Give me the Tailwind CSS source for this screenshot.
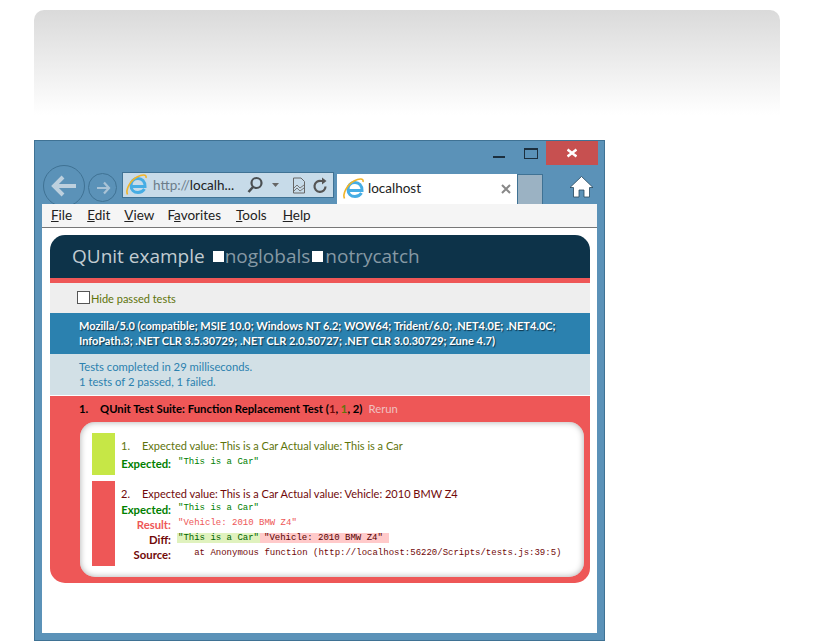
<!DOCTYPE html>
<html>
<head>
<meta charset="utf-8">
<script src="https://cdn.jsdelivr.net/npm/@tailwindcss/browser@4"></script>
</head>
<body class="bg-white overflow-hidden">
<div class="w-[815px] h-[641px] overflow-hidden font-['Lato','Open_Sans',sans-serif]">
  <div class="ml-[34px] mt-[10px] w-[746px] h-[105px] rounded-t-[10px] bg-gradient-to-b from-[#dadada] to-white"></div>

  <div class="ml-[34px] mt-[25px] w-[571px] h-[501px] bg-[#5b92b8] border border-[#3f7294] flex flex-col">
    <!-- title bar -->
    <div class="h-[24px] flex justify-end items-start shrink-0">
      <div class="w-[26px] h-[24px] flex justify-center"><div class="mt-[15px] w-[12px] h-[2px] bg-[#1c2f3e]"></div></div>
      <div class="w-[26px] h-[24px] flex justify-center ml-[6px]"><div class="mt-[7px] w-[14px] h-[11px] border border-[#1c2f3e] border-t-[2px]"></div></div>
      <div class="w-[52px] h-[24px] ml-[2px] mr-[6px] bg-[#c75050] flex items-center justify-center">
        <svg width="10" height="10" viewBox="0 0 10 10"><path d="M0.5 1.5 L9.5 8.5 M9.5 1.5 L0.5 8.5" stroke="#fff" stroke-width="2.4"/></svg>
      </div>
    </div>
    <!-- toolbar -->
    <div class="h-[39px] flex items-start shrink-0 relative">
      <div class="ml-[8px] mt-[0px] w-[42px] h-[42px] rounded-full border border-[#3f7294] flex items-center justify-center">
        <svg width="26" height="22" viewBox="0 0 26 22"><path d="M12 2 L3 11 L12 20 M3 11 H25" fill="none" stroke="#bdd0de" stroke-width="4"/></svg>
      </div>
      <div class="ml-[3px] mt-[8px] w-[29px] h-[29px] rounded-full border border-[#3f7294] flex items-center justify-center">
        <svg width="16" height="14" viewBox="0 0 16 14"><path d="M9 1.5 L14 7 L9 12.5 M14 7 H2" fill="none" stroke="#a9c3d6" stroke-width="2.2"/></svg>
      </div>
      <div class="ml-[5px] mt-[7px] w-[212px] h-[26px] bg-[#c7dbe9] border border-[#3f7294] flex items-center text-[13.5px] relative">
        <svg class="ml-[2px] shrink-0" width="23" height="22" viewBox="0 0 23 22"><path d="M6 11.5 C6 7 9 4.5 13 4.5 C17 4.5 20 7.5 20 12.5 H7 M6 11.5 C6 16 9 18.5 13 18.5 C16 18.5 18 17.3 19.5 15" fill="none" stroke="#46ade4" stroke-width="3"/><path d="M2.5 20.5 C0.5 16 4.5 7 12 3 C17 0.3 22 0 21 4" fill="none" stroke="#f0b429" stroke-width="1.6"/></svg>
        <span class="ml-[5px] text-[#6c7d89]">http://<span class="text-[#222]">localh...</span></span>
        <svg class="ml-[12px] shrink-0" width="18" height="18" viewBox="0 0 18 18"><circle cx="10.5" cy="7" r="5" fill="none" stroke="#4a4f52" stroke-width="2.2"/><path d="M7 11 L2.5 16" stroke="#4a4f52" stroke-width="2.6"/></svg>
        <svg class="ml-[8px] shrink-0" width="8" height="4" viewBox="0 0 8 4"><path d="M0 0 H7 L3.5 4 Z" fill="#666"/></svg>
        <svg class="ml-[12px] shrink-0" width="14" height="17" viewBox="0 0 14 17"><path d="M1.5 1 H9 L12.5 4.5 V16 H1.5 Z" fill="none" stroke="#666"/><path d="M2 11 L5 8 L8 11 L12 8 M2 14 L5 11 L8 14 L12 11" fill="none" stroke="#777"/></svg>
        <svg class="ml-[7px] shrink-0" width="15" height="17" viewBox="0 0 15 17"><path d="M12.5 9.5 A5.5 5.5 0 1 1 8 4 H11" fill="none" stroke="#555" stroke-width="2.2"/><path d="M9 0.5 L13.5 4 L9 7.5 Z" fill="#555"/></svg>
      </div>
      <div class="ml-[3px] mt-[9px] w-[180px] h-[30px] bg-white flex items-center relative">
        <svg class="ml-[5px] shrink-0" width="23" height="22" viewBox="0 0 23 22"><path d="M6 11.5 C6 7 9 4.5 13 4.5 C17 4.5 20 7.5 20 12.5 H7 M6 11.5 C6 16 9 18.5 13 18.5 C16 18.5 18 17.3 19.5 15" fill="none" stroke="#46ade4" stroke-width="3"/><path d="M2.5 20.5 C0.5 16 4.5 7 12 3 C17 0.3 22 0 21 4" fill="none" stroke="#f0b429" stroke-width="1.6"/></svg>
        <span class="ml-[3px] text-[13.5px] text-[#222] leading-none">localhost</span>
        <svg class="ml-auto mr-[6px] shrink-0" width="10" height="10" viewBox="0 0 10 10"><path d="M1 1 L9 9 M9 1 L1 9" stroke="#888" stroke-width="2"/></svg>
      </div>
      <div class="mt-[9px] w-[26px] h-[30px] bg-[#9bb2c3] border border-[#3f7294] border-b-0"></div>
      <div class="ml-[26px] mt-[10px]">
        <svg width="25" height="23" viewBox="0 0 25 23"><path d="M12.5 1.5 L24 12.5 H20.5 V22 H15 V15 H10 V22 H4.5 V12.5 H1 Z" fill="#fff" stroke="#26465c" stroke-width="0.8"/></svg>
      </div>
    </div>
    <!-- content frame -->
    <div class="mx-[7px] h-[429px] bg-white flex flex-col shrink-0 relative z-10">
      <div class="h-[24px] bg-[#f5f5f5] border-b border-[#777] flex items-center text-[13.5px] text-[#222] pl-[9px] shrink-0">
        <span><u>F</u>ile</span><span class="ml-[15px]"><u>E</u>dit</span><span class="ml-[14px]"><u>V</u>iew</span><span class="ml-[13px]">F<u>a</u>vorites</span><span class="ml-[15px]"><u>T</u>ools</span><span class="ml-[16px]"><u>H</u>elp</span>
      </div>
      <!-- QUnit -->
      <div class="mx-[8px] mt-[7px] w-[540px] flex flex-col">
        <div class="h-[43px] bg-[#0d3349] rounded-t-[15px] pl-[22px] flex items-center text-[19px] text-[#8699a4] font-['Open_Sans',sans-serif] leading-none">
          <span class="text-[#c2ccd1]">QUnit example</span>
          <span class="ml-[8px] w-[11px] h-[11px] bg-white inline-block"></span><span class="ml-[1px]">noglobals</span>
          <span class="ml-[2px] w-[11px] h-[11px] bg-white inline-block"></span><span class="ml-[2px]">notrycatch</span>
        </div>
        <div class="h-[5px] bg-[#ee5757]"></div>
        <div class="h-[30px] bg-[#eeeeee] pl-[27px] flex items-center text-[11px] text-[#5e740b]">
          <span class="w-[13px] h-[13px] bg-white border border-[#555] inline-block -mt-[2px]"></span><span class="ml-[1px] mt-[2px]">Hide passed tests</span>
        </div>
        <div class="h-[41px] bg-[#2b81af] pl-[29px] pr-[20px] pt-[6px] text-[11px] leading-[14.5px] font-bold text-white [text-shadow:1px_1px_1px_#0d3349]">
          Mozilla/5.0 (compatible; MSIE 10.0; Windows NT 6.2; WOW64; Trident/6.0; .NET4.0E; .NET4.0C; InfoPath.3; .NET CLR 3.5.30729; .NET CLR 2.0.50727; .NET CLR 3.0.30729; Zune 4.7)
        </div>
        <div class="h-[41px] bg-[#d2e0e6] pl-[29px] pt-[6px] text-[11.25px] leading-[14.5px] text-[#2b81af]">
          Tests completed in 29 milliseconds.<br>1 tests of 2 passed, 1 failed.
        </div>
        <div class="h-[1px] bg-white"></div>
        <div class="h-[187px] bg-[#ee5757] rounded-b-[15px] px-[30px] pb-[6px] flex flex-col">
          <div class="h-[26px] flex items-center text-[11.3px] font-bold text-black shrink-0">
            <span class="w-[21px] -ml-[1px]">1.</span><span>QUnit Test Suite: Function Replacement Test (<span class="text-[#710909]">1</span>, <span class="text-[#5e740b]">1</span>, 2)</span><span class="ml-[6px] font-normal text-[#f0c0c0]">Rerun</span>
          </div>
          <div class="flex-1 bg-white rounded-[15px] mr-[-24px] shadow-[inset_0_0_6px_#aaa] pl-[12px] pt-[11px] text-[11px]">
            <div class="flex h-[42px]">
              <div class="w-[23px] bg-[#c6e746] shrink-0"></div>
              <div class="ml-[6px] text-[#5e740b]">
                <div class="h-[22px] leading-[26px] flex"><span class="w-[21px]">1.</span><span>Expected value: This is a Car Actual value: This is a Car</span></div>
                <div class="flex items-start h-[18px] leading-[18px]"><span class="w-[50px] font-bold text-right text-[#008000] whitespace-nowrap text-[11.3px]">Expected:</span><pre class="ml-[7px] font-['Liberation_Mono',monospace] text-[9px] leading-[14px] text-[#008000]">"This is a Car"</pre></div>
              </div>
            </div>
            <div class="flex h-[85px] mt-[6px]">
              <div class="w-[23px] bg-[#ee5757] shrink-0"></div>
              <div class="ml-[6px] text-[#710909]">
                <div class="h-[16px] leading-[26px] flex"><span class="w-[21px]">2.</span><span>Expected value: This is a Car Actual value: Vehicle: 2010 BMW Z4</span></div>
                <div class="mt-[4px] flex items-start h-[15px] leading-[18px]"><span class="w-[50px] font-bold text-right text-[#008000] text-[11.3px]">Expected:</span><pre class="ml-[7px] font-['Liberation_Mono',monospace] text-[9px] leading-[15px] text-[#008000]">"This is a Car"</pre></div>
                <div class="flex items-start h-[15px] leading-[18px]"><span class="w-[50px] font-bold text-right text-[#ee5757] text-[11.3px]">Result:</span><pre class="ml-[7px] font-['Liberation_Mono',monospace] text-[9px] leading-[15px] text-[#ee5757]">"Vehicle: 2010 BMW Z4"</pre></div>
                <div class="flex items-start h-[15px] leading-[18px]"><span class="w-[50px] font-bold text-right text-[11.3px]">Diff:</span><pre class="ml-[6px] mt-[2px] font-['Liberation_Mono',monospace] text-[9px] leading-[10px] text-[#333]"><span class="bg-[#e0f2be] px-[1px] text-[#006400]">"This is a Car"</span><span class="bg-[#ffcaca] pl-[4px] pr-[6px] text-[#500]">"Vehicle: 2010 BMW Z4"</span></pre></div>
                <div class="flex items-start h-[15px] leading-[18px]"><span class="w-[50px] font-bold text-right text-[11.3px]">Source:</span><pre class="ml-[7px] font-['Liberation_Mono',monospace] text-[9px] leading-[15px] text-[#710909]">   at Anonymous function (http://localhost:56220/Scripts/tests.js:39:5)</pre></div>
              </div>
            </div>
          </div>
        </div>
      </div>
    </div>
  </div>
</div>
</body>
</html>
